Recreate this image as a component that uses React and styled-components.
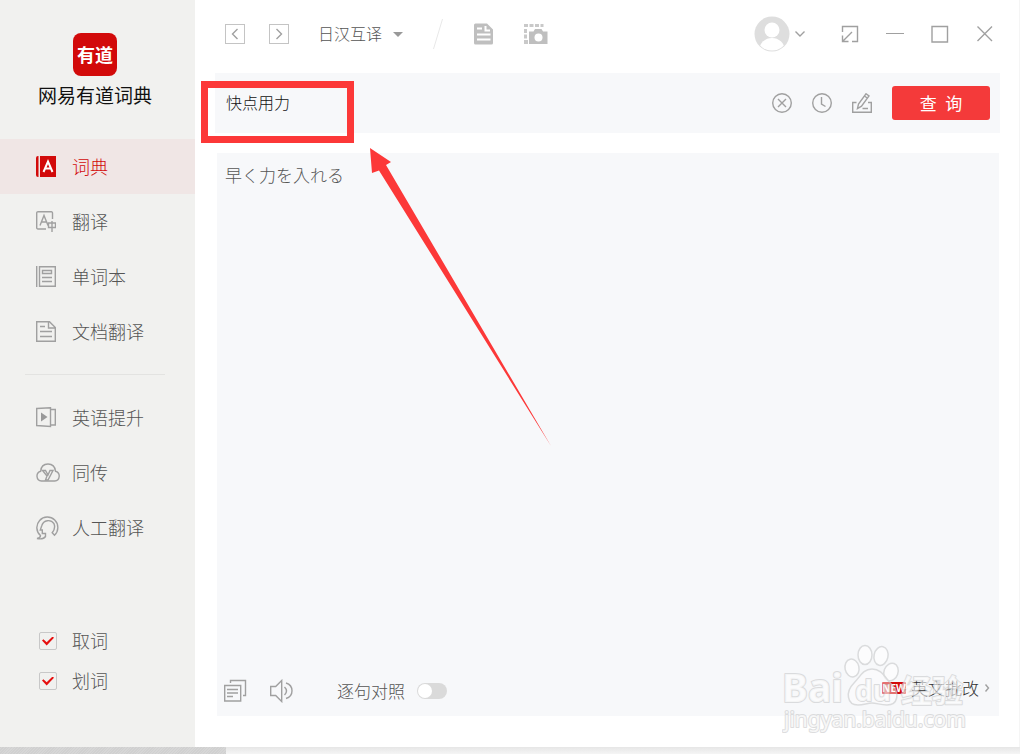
import React, { useState } from "react";
import styled, { createGlobalStyle, css } from "styled-components";

const navItems = [
  { id: "dict", label: "词典", icon: DictIcon },
  { id: "translate", label: "翻译", icon: TranslateIcon },
  { id: "words", label: "单词本", icon: WordbookIcon },
  { id: "docs", label: "文档翻译", icon: DocIcon },
];

const moreItems = [
  { id: "english", label: "英语提升", icon: CourseIcon },
  { id: "interpret", label: "同传", icon: CloudIcon },
  { id: "human", label: "人工翻译", icon: HumanIcon },
];

const App = () => {
  const [active, setActive] = useState("dict");
  const [query, setQuery] = useState("快点用力");

  const renderItem = ({ id, label, icon: ItemIcon }) => (
    <NavItem key={id} type="button" $active={active === id} onClick={() => setActive(id)}>
      <NavIcon>
        <ItemIcon />
      </NavIcon>
      <Label>{label}</Label>
    </NavItem>
  );

  return (
    <Page>
      <GlobalStyle />
      <Window>
        <Sidebar>
          <Brand>
            <Logo>有道</Logo>
            <BrandName>网易有道词典</BrandName>
          </Brand>
          <nav>
            {navItems.map(renderItem)}
            <Divider />
            {moreItems.map(renderItem)}
          </nav>
          <Options>
            <Option>
              <CheckBox type="checkbox" defaultChecked />
              <Label>取词</Label>
            </Option>
            <Option>
              <CheckBox type="checkbox" defaultChecked />
              <Label>划词</Label>
            </Option>
          </Options>
        </Sidebar>

        <Main>
          <TopBar>
            <History>
              <SquareButton type="button" aria-label="后退">
                <Stroke width="8" height="12" viewBox="0 0 8 12">
                  <path d="M6.500 1 1.500 6l5 5" />
                </Stroke>
              </SquareButton>
              <SquareButton type="button" aria-label="前进">
                <Stroke width="8" height="12" viewBox="0 0 8 12">
                  <path d="M1.500 1l5 5-5 5" />
                </Stroke>
              </SquareButton>
            </History>
            <LangBox>
              <LangSelect aria-label="翻译语言">
                <option>日汉互译</option>
                <option>英汉互译</option>
              </LangSelect>
              <svg width="10" height="5" viewBox="0 0 10 5" fill="#999">
                <path d="M0 0h10L5 5z" />
              </svg>
            </LangBox>
            <Slash width="10" height="30" viewBox="0 0 10 30">
              <path d="M9.500 0 .5 30" stroke="#e8e8e8" fill="none" />
            </Slash>
            <Tools>
              <IconButton type="button" aria-label="文档">
                <svg width="20" height="22" viewBox="0 0 20 22">
                  <path d="M1.500 0.500H13l6 6V20a1.500 1.500 0 0 1-1.500 1.500h-16A1.500 1.500 0 0 1 0 20V2A1.500 1.500 0 0 1 1.500.5z" fill="#bfbfbf" />
                  <path d="M3 5.500h5M3 11.500h13.500M3 16.500h13.500M11.500 3v4.500H16" stroke="#fff" strokeWidth="2" fill="none" />
                </svg>
              </IconButton>
              <IconButton type="button" aria-label="截屏">
                <svg width="24" height="22" viewBox="0 0 24 22">
                  <path d="M0 1h4v3H0zM5.500 1h4v3h-4zM11 1h4v3h-4zM16.500 1h3v3h-3zM0 6h3v4H0zM0 11.500h3v4H0zM0 17h4v4H0z" fill="#c9c9c9" />
                  <path d="M5 8.500h4.500L11 6h6.500L19 8.500h4.500V21H5z" fill="#bfbfbf" />
                  <circle cx="14.500" cy="14.500" r="4" fill="#fff" />
                </svg>
              </IconButton>
            </Tools>
            <Account type="button" aria-label="账户">
              <svg width="36" height="36" viewBox="0 0 36 36">
                <defs>
                  <clipPath id="face">
                    <circle cx="18" cy="18" r="16.500" />
                  </clipPath>
                </defs>
                <circle cx="18" cy="18" r="17.500" fill="#dedede" />
                <g clipPath="url(#face)" fill="#fff">
                  <circle cx="18" cy="14" r="7.500" />
                  <ellipse cx="18" cy="33.500" rx="12.500" ry="11.500" />
                </g>
              </svg>
              <Stroke width="10" height="6" viewBox="0 0 10 6">
                <path d="M.5.5 5 5 9.500.5" />
              </Stroke>
            </Account>
            <WindowButtons>
              <IconButton type="button" aria-label="迷你窗口">
                <Stroke width="18" height="18" viewBox="0 0 18 18">
                  <path d="M1.500 7V1.500h15v15H11M1.500 10.500v6h6M2 16 11 7" />
                </Stroke>
              </IconButton>
              <IconButton type="button" aria-label="最小化">
                <Stroke $thin width="18" height="18" viewBox="0 0 18 18">
                  <path d="M0 8.500h18" />
                </Stroke>
              </IconButton>
              <IconButton type="button" aria-label="最大化">
                <Stroke width="18" height="18" viewBox="0 0 18 18">
                  <path d="M1 1.500h15.500v15.500H1z" />
                </Stroke>
              </IconButton>
              <IconButton type="button" aria-label="关闭">
                <Stroke width="18" height="18" viewBox="0 0 18 18">
                  <path d="M1.500 1.500l14.500 14.500M16 1.500 1.500 16" />
                </Stroke>
              </IconButton>
            </WindowButtons>
          </TopBar>

          <SearchBar onSubmit={(e) => e.preventDefault()}>
            <SearchInput aria-label="查询内容" value={query} onChange={(e) => setQuery(e.target.value)} />
            <IconButton type="button" aria-label="清空" onClick={() => setQuery("")}>
              <Stroke width="20" height="20" viewBox="0 0 20 20">
                <circle cx="10" cy="10" r="9.300" />
                <path d="M6 6l8 8M14 6l-8 8" />
              </Stroke>
            </IconButton>
            <IconButton type="button" aria-label="历史">
              <Stroke width="20" height="20" viewBox="0 0 20 20">
                <circle cx="10" cy="10" r="9.300" />
                <path d="M9.500 4v7l4 2.500" />
              </Stroke>
            </IconButton>
            <IconButton type="button" aria-label="手写">
              <Stroke width="20" height="20" viewBox="0 0 20 20">
                <path d="M4.500 9.500H.7v9.800h18.600V9.500H16M10.500 15.500h5.500" />
                <path d="M5.500 15.500 6.500 11 14 .8l3 2.200-7.500 10.200zM12.500 3l3 2.200" />
              </Stroke>
            </IconButton>
            <SearchButton type="submit">查&ensp;询</SearchButton>
          </SearchBar>

          <Result>
            <ResultText lang="ja">早く力を入れる</ResultText>
            <ResultFooter>
              <IconButton type="button" aria-label="复制">
                <Stroke width="24" height="24" viewBox="0 0 24 24">
                  <path d="M.7 6.500h16v15.500H.7zM6.500 4V1.500h15V16.500H19M3 10.500h11M3 14h11M3 17.500h6" />
                </Stroke>
              </IconButton>
              <IconButton type="button" aria-label="朗读">
                <Stroke width="24" height="24" viewBox="0 0 24 24">
                  <path d="M.7 7.500h5l6-6v21l-6-6h-5zM14.500 8q4 4 0 8M16 4c8 2.500 8 13 0 15.500" />
                </Stroke>
              </IconButton>
              <CompareLabel>
                <Label>逐句对照</Label>
                <Toggle type="checkbox" role="switch" />
              </CompareLabel>
              <FixLink href="#correct">
                <NewBadge>NEW</NewBadge>
                <Label>英文批改</Label>
                <Stroke width="6" height="8" viewBox="0 0 6 8">
                  <path d="M1.500.5 4.500 4l-3 3.500" />
                </Stroke>
              </FixLink>
            </ResultFooter>
          </Result>

          <HighlightBox />
          <Pointer width="182" height="299" viewBox="0 0 182 299">
            <path d="M0 0 21 14 16 17 181 298 9 22.500 2 25z" fill="#fc3838" />
          </Pointer>
          <Watermark width="190" height="94" viewBox="0 0 190 94">
            <g fill="#fff" stroke="#cfd0d1" strokeWidth="1.500">
              <ellipse cx="70" cy="25" rx="7" ry="9" transform="rotate(-12 70 25)" />
              <ellipse cx="83" cy="12" rx="7" ry="9.500" />
              <ellipse cx="99" cy="13" rx="7" ry="9.500" transform="rotate(12 99 13)" />
              <ellipse cx="109" cy="29" rx="7" ry="9" transform="rotate(20 109 29)" />
              <path d="M90 26c-9 0-12 8-18 14-9 9-7 22 4 22 6 0 9-2 14-2s8 2 15 2c11 0 13-12 5-20-7-7-10-16-20-16z" fillOpacity="0.600" />
            </g>
            <WaterText x="0" y="59" $size={39} $bold>Bai</WaterText>
            <WaterText x="73" y="58" $size={28} $bold>du</WaterText>
            <WaterText x="119" y="59" $size={31} $bold>经验</WaterText>
            <WaterText x="2" y="84" $size={21}>jingyan.baidu.com</WaterText>
          </Watermark>
        </Main>
      </Window>
      <Desktop />
    </Page>
  );
};

export default App;

function DictIcon() {
  return (
    <svg width="20" height="21" viewBox="0 0 20 21">
      <path d="M2.500 0v21H2a2 2 0 0 1-2-2V2a2 2 0 0 1 2-2zM4 0h16v21H4z" fill="#d20a0a" />
      <path d="M7.500 16 12 5.500 16.500 16M9 12.500h6" stroke="#fff" strokeWidth="2" fill="none" />
    </svg>
  );
}

function TranslateIcon() {
  return (
    <Stroke width="20" height="21" viewBox="0 0 20 21">
      <path d="M10 18H2a1.300 1.300 0 0 1-1.300-1.500V2A1.300 1.300 0 0 1 2 .7h13A1.300 1.300 0 0 1 16.500 2v6" />
      <path d="M4 14.500 8 4.500l4 10M5.500 11h5M12.500 12h7v4.500h-7zM16 10v11" />
    </Stroke>
  );
}

function WordbookIcon() {
  return (
    <Stroke width="20" height="21" viewBox="0 0 20 21">
      <path d="M.7 0v21M3.500.7h15.800v19.600H3.500zM6.500 4.500h9v3h-9zM6 11.500h10M6 15.500h10" />
    </Stroke>
  );
}

function DocIcon() {
  return (
    <Stroke width="20" height="21" viewBox="0 0 20 21">
      <path d="M.7.7h12.800l5.800 5.800v13.800H.7zM12.500 1v6h7M4 5.500h5M4 10.500h12M4 15.500h12" />
    </Stroke>
  );
}

function CourseIcon() {
  return (
    <Stroke width="20" height="21" viewBox="0 0 20 21">
      <path d="M.7 1.500 14.500.7v18.800L.7 18.500zM14.500 2.500h4.800v15.500h-4.800" />
      <path d="M5 5.500v9l6.500-4.500z" fill="#999" stroke="none" />
    </Stroke>
  );
}

function CloudIcon() {
  return (
    <Stroke width="24" height="20" viewBox="0 0 24 20">
      <path d="M5.500 18a5 5 0 0 1-.8-9.800C5 3.500 8 1 12 1s7 2.500 7.500 7.200a5 5 0 0 1-.8 9.800z" />
      <path d="M6.500 7.500h3l2.500 4.500 2-4.500h3l-5 9.500H9.500l1.500-4z" />
    </Stroke>
  );
}

function HumanIcon() {
  return (
    <Stroke width="24" height="24" viewBox="0 0 24 24">
      <path d="M1 22.500c2.500-.3 3.500-1.500 3.500-3A10.500 10.500 0 1 1 18.500 19.200l-2.300-2.500c2.500-3 3-6 1.800-9A6.800 6.800 0 0 0 5.800 9.500L4.300 14h2v3.500h3.200v3c-1.500 2.200-5 2.800-8.500 2z" />
    </Stroke>
  );
}

const GlobalStyle = createGlobalStyle`
*{
    box-sizing: border-box;
}
body{
    margin: 0;
    background-color: white;
    font-family: "Noto Sans CJK SC", "Noto Sans", sans-serif;
    font-weight: 300;
    color: #555;
}
button, input, select{
    font-family: inherit;
    font-weight: inherit;
}
`;

const Stroke = styled.svg`
fill: none;
stroke: #a0a0a0;
stroke-width: ${({ $thin }) => ($thin ? "1" : "1.4")};
display: block;
flex-shrink: 0;
`;

/* lifts CJK text to the optical middle of its row */
const Label = styled.span`
padding-bottom: 2px;
`;

const Page = styled.div`
min-height: 100vh;
display: flex;
flex-direction: column;
`;

const Window = styled.div`
flex: 1;
display: flex;
border-right: 1px solid #f5f5f5;
`;

/* strip of desktop and window shadow under the window */
const Desktop = styled.div`
height: 7px;
background: repeating-linear-gradient(135deg, #d0d0d0 0 1px, #d6d6d6 1px 2px) no-repeat left / 226px 100%,
    linear-gradient(#e6e6e6, #f5f5f5);
`;

const Sidebar = styled.aside`
width: 195px;
flex-shrink: 0;
display: flex;
flex-direction: column;
background-color: #f1f1ef;
`;

const Brand = styled.div`
height: 139px;
padding: 33px 5px 0 0;
display: flex;
flex-direction: column;
align-items: center;
`;

const Logo = styled.div`
width: 44px;
height: 43px;
border-radius: 8px;
display: flex;
justify-content: center;
align-items: center;
background-color: #d20a0a;
color: white;
font-size: 18px;
line-height: 24px;
font-weight: 700;
padding-bottom: 2px;
`;

const BrandName = styled.h1`
margin: 7px 0 0;
font-size: 19px;
line-height: 24px;
font-weight: 400;
color: #111;
`;

const NavItem = styled.button`
width: 100%;
height: 55px;
border: none;
padding: 0 0 0 36px;
display: flex;
align-items: center;
background-color: transparent;
color: #555;
font-size: 18px;
cursor: pointer;
${({ $active }) =>
  $active &&
  css`
    background-color: #f0e6e5;
    color: #d20a0a;
  `}
`;

const NavIcon = styled.span`
width: 36px;
display: flex;
`;

const Divider = styled.hr`
height: 1px;
border: none;
margin: 15px 30px 15px 25px;
background-color: #e3e3e1;
`;

const Options = styled.div`
margin-top: auto;
padding-bottom: 46px;
`;

const Option = styled.label`
height: 40px;
padding-left: 39px;
display: flex;
align-items: center;
gap: 15px;
font-size: 18px;
`;

const CheckBox = styled.input`
appearance: none;
width: 18px;
height: 18px;
margin: 0;
border: 1px solid #c8c8c8;
border-radius: 2px;
display: grid;
place-content: center;

&:checked::after{
    content: "";
    width: 12px;
    height: 9px;
    background-color: #e60f0f;
    clip-path: polygon(0 45%, 12% 30%, 39% 64%, 88% 0, 100% 14%, 39% 100%);
}
`;

const Main = styled.main`
flex: 1;
min-width: 0;
position: relative;
display: flex;
flex-direction: column;
background-color: white;
`;

const TopBar = styled.header`
height: 68px;
margin-bottom: 5px;
padding: 0 25px 0 30px;
display: flex;
align-items: center;
`;

const History = styled.div`
display: flex;
gap: 24px;
`;

const SquareButton = styled.button`
width: 20px;
height: 20px;
padding: 0;
border: 1px solid #c4c4c4;
display: flex;
justify-content: center;
align-items: center;
background-color: white;
cursor: pointer;
`;

const LangBox = styled.div`
margin-left: 29px;
display: flex;
align-items: center;
gap: 10px;
`;

const LangSelect = styled.select`
appearance: none;
border: none;
padding: 0 0 2px;
background-color: transparent;
color: #555;
font-size: 16px;
line-height: 24px;
`;

const Slash = styled.svg`
margin: 0 31px 0 30px;
flex-shrink: 0;
`;

const Tools = styled.div`
display: flex;
gap: 30px;
`;

const IconButton = styled.button`
border: none;
padding: 0;
display: flex;
flex-shrink: 0;
background-color: transparent;
cursor: pointer;
`;

const Account = styled(IconButton)`
margin-left: auto;
align-items: center;
gap: 5px;
`;

const WindowButtons = styled.div`
margin-left: 36px;
display: flex;
gap: 27px;
`;

const SearchBar = styled.form`
height: 60px;
margin: 0 19px 0 20px;
padding: 0 10px 0 11px;
display: flex;
align-items: center;
gap: 20px;
background-color: #f7f8fa;
`;

const SearchInput = styled.input`
flex: 1;
min-width: 0;
border: none;
outline: none;
padding: 0 0 2px;
background-color: transparent;
color: #111;
font-size: 16px;
`;

const SearchButton = styled.button`
width: 98px;
height: 34px;
border: none;
border-radius: 3px;
padding: 0 0 2px;
background-color: #f43a3a;
color: white;
font-size: 17px;
font-weight: 400;
cursor: pointer;
`;

const Result = styled.section`
flex: 1;
margin: 20px 20px 31px 22px;
display: flex;
flex-direction: column;
justify-content: space-between;
background-color: #f7f8fa;
`;

const ResultText = styled.p`
margin: 0;
padding: 10px 8px;
font-family: "Noto Sans CJK JP", sans-serif;
font-size: 17px;
line-height: 24px;
`;

const ResultFooter = styled.div`
height: 50px;
padding: 0 9px 0 7px;
display: flex;
align-items: center;
gap: 22px;
font-size: 17px;
`;

const CompareLabel = styled.label`
margin-left: 21px;
display: flex;
align-items: center;
gap: 12px;
`;

const Toggle = styled.input`
appearance: none;
width: 30px;
height: 16px;
margin: 0;
padding: 1px;
border-radius: 8px;
background-color: #dadada;

&::after{
    content: "";
    display: block;
    width: 14px;
    height: 14px;
    border-radius: 50%;
    background-color: white;
}
&:checked::after{
    margin-left: auto;
}
`;

const FixLink = styled.a`
margin-left: auto;
padding-bottom: 6px;
display: flex;
align-items: center;
gap: 5px;
color: #333;
text-decoration: none;
`;

const NewBadge = styled.span`
width: 24px;
height: 12px;
border-radius: 1px;
background-color: #d20a0a;
color: white;
font-family: "Open Sans", sans-serif;
font-size: 10px;
line-height: 12px;
font-weight: 700;
text-align: center;
`;

const HighlightBox = styled.div`
position: absolute;
left: 6px;
top: 81px;
width: 153px;
height: 62px;
border: 7px solid #fc3838;
pointer-events: none;
`;

const Pointer = styled.svg`
position: absolute;
left: 175px;
top: 148px;
pointer-events: none;
`;

const Watermark = styled.svg`
position: absolute;
right: 47px;
bottom: 10px;
opacity: 0.7;
pointer-events: none;
`;

const WaterText = styled.text`
font-family: "Noto Sans", "Noto Sans CJK SC", sans-serif;
font-size: ${({ $size }) => $size}px;
font-weight: ${({ $bold }) => ($bold ? 700 : 400)};
fill: white;
fill-opacity: 0.8;
stroke: #cfd0d1;
stroke-width: 2px;
stroke-linejoin: round;
paint-order: stroke;
`;
